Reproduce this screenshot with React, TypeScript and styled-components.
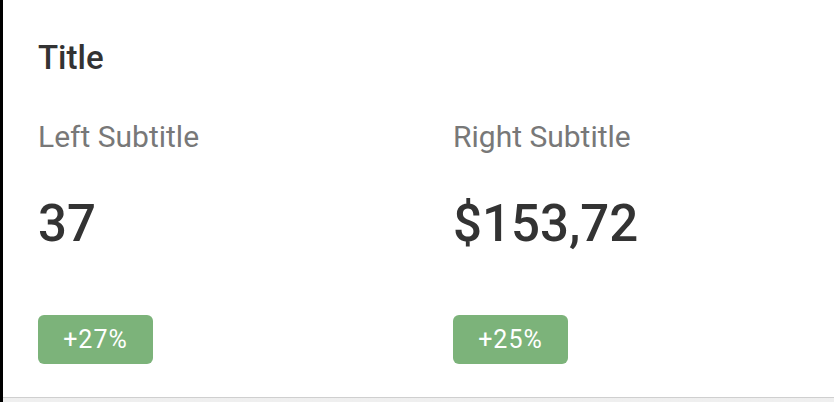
import { FC } from "react";
import styled, { createGlobalStyle } from "styled-components";

const GlobalStyle = createGlobalStyle`
  html, body {
    margin: 0;
    padding: 0;
    background: #ececec;
  }
  body {
    font-family: "Roboto", "Noto Sans", sans-serif;
  }
`;

const Screen = styled.div`
  width: 834px;
  height: 402px;
  overflow: hidden;
  background: linear-gradient(#d4d4d4, #efefef);
  border-left: 3px solid #000000;
  box-sizing: border-box;
`;

const Card = styled.div`
  height: 398px;
  box-sizing: border-box;
  background: #ffffff;
  border-bottom: 1px solid #cfcfcf;
  padding: 38px 0 0 35px;
  display: flex;
  flex-direction: column;
`;

const Title = styled.div`
  font-size: 33px;
  line-height: 40px;
  font-weight: 500;
  color: #333333;
`;

const Columns = styled.div`
  margin-top: 41px;
  display: grid;
  grid-template-columns: 415px 1fr;
`;

const Column = styled.div`
  display: flex;
  flex-direction: column;
  align-items: flex-start;
`;

const Subtitle = styled.div`
  font-size: 30px;
  line-height: 36px;
  font-weight: 400;
  color: #787878;
`;

const Value = styled.div`
  margin-top: 39px;
  font-size: 51px;
  line-height: 60px;
  font-weight: 500;
  color: #333333;
`;

const Badge = styled.div`
  margin-top: 61px;
  width: 115px;
  height: 49px;
  box-sizing: border-box;
  border-radius: 6px;
  background: #7cb37a;
  color: #ffffff;
  font-size: 25px;
  letter-spacing: 1px;
  display: flex;
  align-items: center;
  justify-content: center;
`;

const stats = [
  { label: "Left Subtitle", value: "37", change: "+27%" },
  { label: "Right Subtitle", value: "$153,72", change: "+25%" },
];

const App: FC = () => {
  return (
    <>
      <GlobalStyle />
      <Screen>
        <Card>
          <Title>Title</Title>
          <Columns>
            {stats.map((s) => (
              <Column key={s.label}>
                <Subtitle>{s.label}</Subtitle>
                <Value>{s.value}</Value>
                <Badge>{s.change}</Badge>
              </Column>
            ))}
          </Columns>
        </Card>
      </Screen>
    </>
  );
};

export default App;
